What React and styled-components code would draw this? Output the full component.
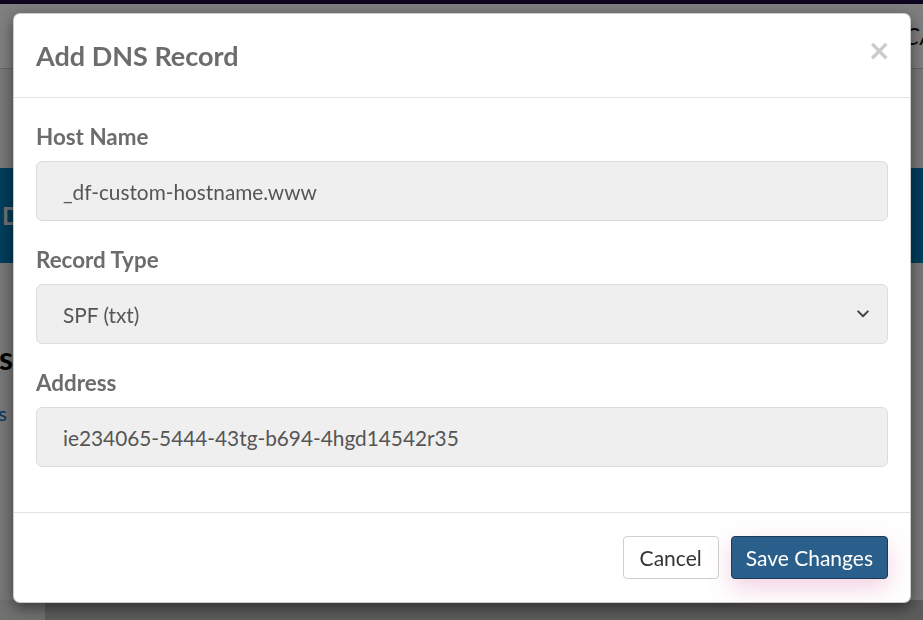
import React from "react";
import styled, { createGlobalStyle } from "styled-components";

const GlobalStyle = createGlobalStyle`
  html, body {
    margin: 0;
    padding: 0;
    height: 100%;
    overflow: hidden;
    font-family: Lato, "Open Sans", sans-serif;
  }
  #root {
    height: 100%;
  }
`;

// page that sits behind the dialog
const Page = styled.div`
  height: 100%;
  display: flex;
  flex-direction: column;
  background: #f1f1f1;
`;

const TopStrip = styled.div`
  height: 4px;
  background: #1c0a42;
`;

const Header = styled.header`
  height: 64px;
  background: #fff;
  border-bottom: 1px solid #c9c9c9;
  display: flex;
  align-items: center;
  justify-content: flex-end;
  overflow: hidden;
`;

const NavItem = styled.span`
  font-size: 23px;
  font-style: italic;
  color: #111;
  letter-spacing: 1px;
  margin-right: -40px;
`;

const Gap = styled.div`
  height: 99px;
  background: #f1f1f1;
`;

const Hero = styled.div`
  height: 95px;
  background: #007bb9;
  display: flex;
  align-items: center;
  padding-left: 2px;
  font-size: 24px;
  font-weight: 700;
  color: #e6e6e6;
`;

const Content = styled.div`
  flex: 1;
  display: flex;
  flex-direction: column;
`;

const Edge = styled.div`
  width: 13px;
  overflow: hidden;
  display: flex;
  flex-direction: column;
  align-items: flex-end;
  padding-top: 75px;
  gap: 24px;
`;

const EdgeHeading = styled.span`
  font-size: 32px;
  font-weight: 700;
  color: #000;
  white-space: nowrap;
`;

const EdgeLink = styled.span`
  font-size: 20px;
  color: #0a6fc2;
  white-space: nowrap;
  margin-right: 6px;
`;

const Bottom = styled.div`
  margin-top: auto;
  height: 20px;
  display: flex;
`;

const BottomSide = styled.div`
  width: 45px;
  background: #e2e2e2;
`;

const BottomMain = styled.div`
  flex: 1;
  background: #b9b9b9;
`;

// dialog
const Backdrop = styled.div`
  position: fixed;
  inset: 0;
  background: rgba(0, 0, 0, 0.5);
  display: flex;
  align-items: flex-start;
  justify-content: flex-start;
`;

const Dialog = styled.div`
  margin: 13px 0 0 13px;
  width: 898px;
  height: 590px;
  box-sizing: border-box;
  background: #fff;
  border: 1px solid rgba(0, 0, 0, 0.2);
  border-radius: 7px;
  box-shadow: 0 5px 15px rgba(0, 0, 0, 0.5);
  display: flex;
  flex-direction: column;
`;

const DialogHeader = styled.div`
  height: 84px;
  box-sizing: border-box;
  padding: 0 23px 0 22px;
  border-bottom: 1px solid #e3e3e3;
  display: flex;
  align-items: center;
  justify-content: space-between;
`;

const Title = styled.h4`
  margin: 0;
  font-size: 27px;
  font-weight: 700;
  color: #6c6c6c;
`;

const Close = styled.button`
  border: 0;
  background: none;
  padding: 0;
  margin: -10px -4px 0 0;
  font-family: "DejaVu Sans", sans-serif;
  font-size: 28px;
  font-weight: 700;
  line-height: 1;
  color: #cbcbcb;
  cursor: pointer;
`;

const DialogBody = styled.div`
  flex: 1;
  padding: 24px 22px 0 22px;
`;

const Field = styled.div`
  display: flex;
  flex-direction: column;
  margin-bottom: 24px;
`;

const Label = styled.label`
  font-size: 22.4px;
  font-weight: 700;
  line-height: 30px;
  color: #6c6c6c;
  margin-bottom: 9px;
`;

const Control = styled.div`
  position: relative;
  height: 60px;
  box-sizing: border-box;
  background: #efefef;
  border: 1px solid #dcdcdc;
  border-radius: 6px;
  display: flex;
  align-items: center;
  padding: 0 18px 0 26px;
  font-size: 20.8px;
  color: #555;
`;

const ControlText = styled.span`
  flex: 1;
`;

const Chevron = () => (
  <svg width="12" height="8" viewBox="0 0 12 8" fill="none">
    <path d="M1.2 1.4 6 6.2l4.8-4.8" stroke="#444" strokeWidth="2" strokeLinecap="round" strokeLinejoin="round" />
  </svg>
);

const DialogFooter = styled.div`
  height: 90px;
  box-sizing: border-box;
  border-top: 1px solid #e3e3e3;
  padding: 0 22px 0 0;
  display: flex;
  align-items: center;
  justify-content: flex-end;
  gap: 12px;
`;

const Button = styled.button`
  height: 43px;
  box-sizing: border-box;
  padding: 0 ${({ primary }) => (primary ? "14px" : "16px")};
  font-family: Lato, sans-serif;
  font-size: 21px;
  border-radius: 4px;
  cursor: pointer;
  border: 1px solid ${({ primary }) => (primary ? "#1b3a57" : "#cfcfcf")};
  background: ${({ primary }) => (primary ? "#2b5f8b" : "#fff")};
  color: ${({ primary }) => (primary ? "#fff" : "#333")};
  box-shadow: ${({ primary }) => (primary ? "0 9px 24px rgba(214, 110, 160, 0.32)" : "none")};
`;

const fields = [
  { label: "Host Name", value: "_df-custom-hostname.www" },
  { label: "Record Type", value: "SPF (txt)", select: true },
  { label: "Address", value: "ie234065-5444-43tg-b694-4hgd14542r35" },
];

export default function App() {
  return (
    <>
      <GlobalStyle />
      <Page>
        <TopStrip />
        <Header>
          <NavItem>CART</NavItem>
        </Header>
        <Gap />
        <Hero>D</Hero>
        <Content>
          <Edge>
            <EdgeHeading>Records</EdgeHeading>
            <EdgeLink>Records</EdgeLink>
          </Edge>
          <Bottom>
            <BottomSide />
            <BottomMain />
          </Bottom>
        </Content>
      </Page>

      <Backdrop>
        <Dialog>
          <DialogHeader>
            <Title>Add DNS Record</Title>
            <Close aria-label="Close">×</Close>
          </DialogHeader>
          <DialogBody>
            {fields.map((f) => (
              <Field key={f.label}>
                <Label>{f.label}</Label>
                <Control>
                  <ControlText>{f.value}</ControlText>
                  {f.select && <Chevron />}
                </Control>
              </Field>
            ))}
          </DialogBody>
          <DialogFooter>
            <Button>Cancel</Button>
            <Button primary>Save Changes</Button>
          </DialogFooter>
        </Dialog>
      </Backdrop>
    </>
  );
}
